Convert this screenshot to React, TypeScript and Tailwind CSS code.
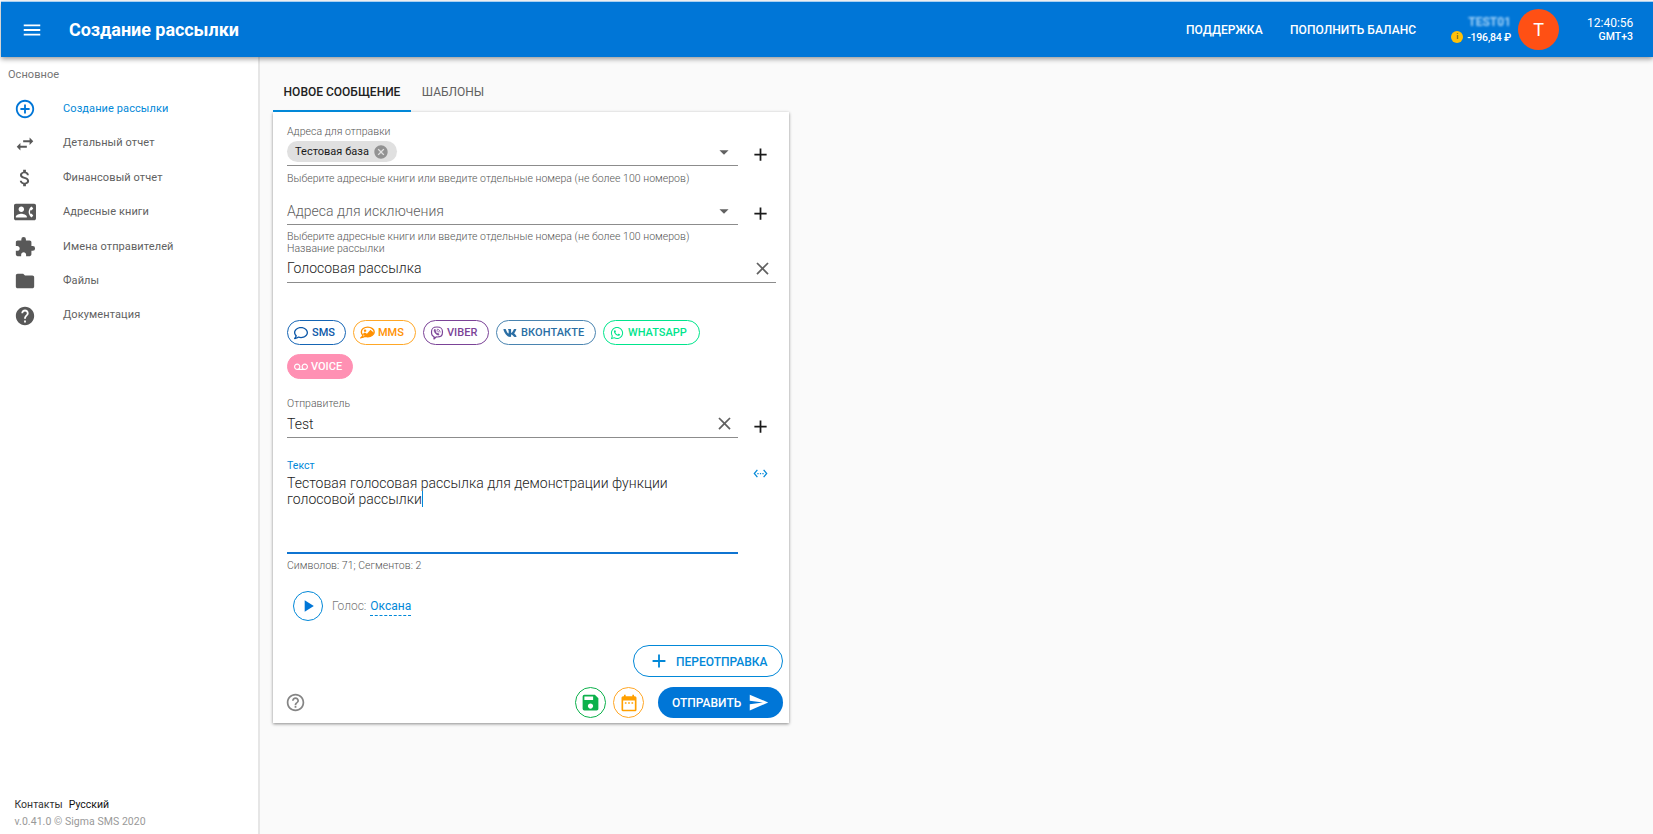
import type { ReactNode } from 'react';
import clsx from 'clsx';
import {
  MdAdd,
  MdAddCircleOutline,
  MdArrowDropDown,
  MdAttachMoney,
  MdCancel,
  MdClose,
  MdContactPhone,
  MdDateRange,
  MdExtension,
  MdFolder,
  MdHelp,
  MdHelpOutline,
  MdMenu,
  MdPlayArrow,
  MdSave,
  MdSend,
  MdSettingsEthernet,
  MdSwapHoriz,
  MdVoicemail,
} from 'react-icons/md';
import { FaRegComment, FaVk, FaWhatsapp } from 'react-icons/fa';

const MENU = [
  { label: 'Создание рассылки', icon: MdAddCircleOutline, active: true },
  { label: 'Детальный отчет', icon: MdSwapHoriz },
  { label: 'Финансовый отчет', icon: MdAttachMoney },
  { label: 'Адресные книги', icon: MdContactPhone },
  { label: 'Имена отправителей', icon: MdExtension },
  { label: 'Файлы', icon: MdFolder },
  { label: 'Документация', icon: MdHelp },
];

// Speech bubble with a small landscape inside
function MmsIcon() {
  return (
    <svg viewBox="0 0 28 24" className="h-[13px] w-[15px]" fill="currentColor">
      <path
        d="M14.500 2C7.700 2 2.500 6 2.500 11c0 2.400 1.200 4.500 3 6-.4 1.700-1.500 3.200-3 4.500 2.600-.2 5-1.100 7-2.500 1.600.5 3.200.8 5 .8 6.800 0 12-4 12-8.800S21.300 2 14.500 2z"
        fill="none"
        stroke="currentColor"
        strokeWidth="2.600"
      />
      <circle cx="9.500" cy="8.500" r="2.300" />
      <path d="M5 15l4-3 4 2.500L19.500 7l6.500 5.500c-1 4-5.500 7-11.500 7l-5-.5z" />
    </svg>
  );
}

function ViberIcon() {
  return (
    <svg
      viewBox="0 0 28 28"
      className="size-3.5"
      fill="none"
      stroke="currentColor"
      strokeWidth="2.400"
      strokeLinecap="round"
      strokeLinejoin="round"
    >
      <path d="M14 2C5.500 2 3 4.500 3 12c0 5.500 1.300 8.200 5 9.300V26l4.200-4.100c10.300.5 12.800-2 12.800-9.900C25 4.500 22.500 2 14 2z" />
      <path d="M9.500 6.500L8 8c0 4.500 4 9 8.500 10.300l2-1.800-2.800-2.300-1.500 1c-1.700-.9-2.600-2-3-3.500l1.200-1.400z" fill="currentColor" strokeWidth="1" />
      <path d="M14.500 6.500c3.500.2 5.500 2.200 5.700 5.700M14.800 9.800c1.400.2 2 .8 2.200 2.200" strokeWidth="1.600" />
    </svg>
  );
}

function Header() {
  return (
    <header className="relative z-10 ml-px mt-px flex h-14 shrink-0 items-center border-t border-[#a9d0f2] bg-[#0076d7] px-5 text-white shadow-[0_2px_5px_rgba(0,0,0,0.4)]">
      <MdMenu className="size-[22px]" />
      <h1 className="ml-[26px] text-[18px] font-bold leading-6 tracking-[-0.05px]">Создание рассылки</h1>
      <nav className="ml-auto flex text-[12px] font-medium">
        <a className="mr-[27px] w-[77px] whitespace-nowrap tracking-[0.07px]">ПОДДЕРЖКА</a>
        <a className="w-[126px] whitespace-nowrap tracking-[0.07px]">ПОПОЛНИТЬ БАЛАНС</a>
      </nav>
      <div className="ml-[35px] flex w-[60px] flex-col items-end text-[11px] font-medium leading-[15px]">
        <span className="text-[12px] font-bold leading-[15px] text-[#a5d3f7] blur-[1.2px]">TEST01</span>
        <span className="flex items-center gap-1 whitespace-nowrap text-[10.500px] tracking-[-0.2px]">
          <span className="flex size-3 items-center justify-center rounded-full bg-[#ffc107] text-[8px] font-bold leading-none text-[#7a6a20]">
            i
          </span>
          -196,84 ₽
        </span>
      </div>
      <div className="ml-[7px] flex size-[41px] items-center justify-center rounded-full bg-[#ff5014] text-[18px]">
        T
      </div>
      <div className="ml-7 w-[46px] text-right text-[12px] leading-[13px]">
        <div className="whitespace-nowrap">12:40:56</div>
        <div className="text-[10.500px] font-medium">GMT+3</div>
      </div>
    </header>
  );
}

function Sidebar() {
  return (
    <aside className="flex w-[260px] shrink-0 flex-col border-r-2 border-[#e6e6e6] bg-white">
      <div className="mt-[10px] pl-2 text-[11px] leading-4 tracking-[0.05px] text-[#757575]">Основное</div>
      <ul className="mt-[9px]">
        {MENU.map(({ label, icon: Icon, active }) => (
          <li
            key={label}
            className={clsx(
              'flex h-[34.400px] items-center pl-3.5 text-[11px] tracking-[0.1px]',
              active ? 'text-[#0288d8]' : 'text-[#616161]'
            )}
          >
            <Icon className={clsx('size-[22px]', active ? 'text-[#0076d7]' : 'text-[#585858]')} />
            <span className="ml-[27px]">{label}</span>
          </li>
        ))}
      </ul>
      <footer className="mb-1 mt-auto pl-[14.500px] text-[10.500px] leading-[17px]">
        <div className="flex gap-[6px] text-[#333]">
          <a>Контакты</a>
          <a className="text-[#111]">Русский</a>
        </div>
        <div className="tracking-[0.05px] text-[#999]">v.0.41.0 © Sigma SMS 2020</div>
      </footer>
    </aside>
  );
}

interface FieldProps {
  children: ReactNode;
  action?: ReactNode;
  side?: ReactNode;
  className?: string;
}

// Underlined row with an icon inside it and an optional one to the right
function Field({ children, action, side, className }: FieldProps) {
  return (
    <div className={clsx('flex', className)}>
      <div className="flex flex-1 items-center justify-between border-b border-[#8c8c8c] text-[14px] font-light tracking-[0.02px] text-[#222]">
        {children}
        {action}
      </div>
      {side && <div className="flex h-[23px] w-[38px] items-center justify-end self-end pr-[5px]">{side}</div>}
    </div>
  );
}

function Label({ children, className }: { children: ReactNode; className?: string }) {
  return (
    <div
      className={clsx(
        'whitespace-nowrap text-[10.500px] leading-3 tracking-[0.03px]',
        className ?? 'font-light text-[#555]'
      )}
    >
      {children}
    </div>
  );
}

const HINT = 'Выберите адресные книги или введите отдельные номера (не более 100 номеров)';

const PILL = 'flex h-[25px] items-center rounded-full border-[1.500px] pl-1.5 text-[11px] font-medium whitespace-nowrap';

function Channels() {
  return (
    <div className="flex w-[440px] flex-wrap gap-x-[7px] gap-y-[9px]">
      <button className={clsx(PILL, 'w-[59px] gap-1 border-[#1565b5] text-[#0b57a8]')}>
        <FaRegComment className="size-3.5" />
        <span className="pt-px">SMS</span>
      </button>
      <button className={clsx(PILL, 'w-[63px] gap-[3px] border-[#ffa726] text-[#ff9100]')}>
        <MmsIcon />
        <span className="pt-px">MMS</span>
      </button>
      <button className={clsx(PILL, 'w-[66px] gap-[3px] border-[#7b4397] text-[#7b4397]')}>
        <ViberIcon />
        <span className="pt-px">VIBER</span>
      </button>
      <button className={clsx(PILL, 'w-[100px] gap-1 border-[#4a84b0] text-[#2a6ea4]')}>
        <FaVk className="size-3.5" />
        <span className="pt-px tracking-[0.07px]">ВКОНТАКТЕ</span>
      </button>
      <button className={clsx(PILL, 'w-[97px] gap-1 border-[#00e58c] font-bold text-[#00e58c]')}>
        <FaWhatsapp className="size-3.5" />
        <span className="pt-px">WHATSAPP</span>
      </button>
      <button className={clsx(PILL, 'w-[66px] gap-[3px] border-[#ff90b3] bg-[#ff90b3] font-bold text-white')}>
        <MdVoicemail className="size-[14px]" />
        <span className="pt-px">VOICE</span>
      </button>
    </div>
  );
}

function MessageCard() {
  const plus = <MdAdd className="size-[21px] text-[#1a1a1a]" />;
  const arrow = <MdArrowDropDown className="mr-[3px] size-[22px] text-[#616161]" />;

  return (
    <div className="h-[611px] w-[516px] bg-white pl-[14px] pr-[13px] pt-[14px] shadow-[0_1px_3px_rgba(0,0,0,0.45)]">
      <Label>Адреса для отправки</Label>
      <Field className="h-[28px]" action={arrow} side={plus}>
        <span className="flex h-[21px] items-center gap-1 rounded-full bg-[#e0e0e0] px-2 text-[11px] font-normal text-[#1a1a1a]">
          <span className="pt-px">Тестовая база</span>
          <MdCancel className="size-4 text-[#929292]" />
        </span>
      </Field>
      <Label className="mt-[7px] font-light text-[#555]">{HINT}</Label>

      <Field className="mt-[13px] h-[27px]" action={arrow} side={plus}>
        <span className="text-[#606060]">Адреса для исключения</span>
      </Field>
      <Label className="mt-[6px] font-light text-[#555]">{HINT}</Label>
      <Label>Название рассылки</Label>
      <Field className="h-[28px]" action={<MdClose className="mr-[3px] size-[21px] text-[#616161]" />}>
        Голосовая рассылка
      </Field>

      <div className="mt-[37px]">
        <Channels />
      </div>

      <Label className="mt-[19px] font-light text-[#555]">Отправитель</Label>
      <Field className="h-[28px]" action={<MdClose className="mr-[3px] size-[21px] text-[#616161]" />} side={plus}>
        <span className="pt-px">Test</span>
      </Field>

      <div className="mt-[22px] flex h-[94px]">
        <div className="flex-1 border-b-2 border-[#0f74d1]">
          <Label className="text-[#0288d8]">Текст</Label>
          <p className="mt-[3px] w-[400px] text-[14px] font-light leading-4 tracking-[0.02px] text-[#222]">
            Тестовая голосовая рассылка для демонстрации функции голосовой рассылки
            <span className="inline-block h-4 w-px bg-[#0288d8] align-top" />
          </p>
        </div>
        <div className="flex w-[38px] justify-end pr-[5px] pt-[6px]">
          <MdSettingsEthernet className="mr-[3px] size-[15px] text-[#0288d8]" />
        </div>
      </div>
      <Label className="mt-[6px] font-light text-[#555]">Символов: 71; Сегментов: 2</Label>

      <div className="ml-[6px] mt-[19px] flex h-[30px] items-center text-[12px]">
        <button className="flex size-[30px] items-center justify-center rounded-full border border-[#0288d8]">
          <MdPlayArrow className="size-5 text-[#0076d7]" />
        </button>
        <span className="ml-[9px] font-light text-[#777]">Голос:</span>
        <a className="ml-1 border-b border-dashed border-[#0288d8] text-[#0288d8]">Оксана</a>
      </div>

      <div className="-mr-[7px] mt-6 flex justify-end">
        <button className="flex h-8 w-[150px] items-center rounded-full border border-[#0288d8] pl-[14px] text-[12px] font-medium text-[#0288d8]">
          <MdAdd className="mr-[6px] size-[22px]" />
          <span className="pt-px">ПЕРЕОТПРАВКА</span>
        </button>
      </div>

      <div className="-mr-[7px] mt-[10px] flex items-center">
        <MdHelpOutline className="-ml-[2px] mr-auto size-[21px] text-[#858585]" />
        <button className="mr-[7px] flex size-[31px] items-center justify-center rounded-full border border-[#0cb14b] text-[#0cb14b]">
          <MdSave className="size-[21px]" />
        </button>
        <button className="mr-[14px] flex size-[31px] items-center justify-center rounded-full border border-[#ffa726] text-[#ffa000]">
          <MdDateRange className="size-5" />
        </button>
        <button className="flex h-[31px] w-[125px] items-center rounded-full bg-[#0076d7] pl-[14px] text-[12px] font-medium text-white">
          ОТПРАВИТЬ
          <MdSend className="ml-[7px] size-[21px]" />
        </button>
      </div>
    </div>
  );
}

export default function App() {
  return (
    <div className="flex h-[834px] w-[1653px] flex-col overflow-hidden bg-white font-['Roboto','Liberation_Sans',sans-serif]">
      <Header />
      <div className="flex flex-1 bg-[#fafafa]">
        <Sidebar />
        <main className="pl-[13px]">
          <div className="flex h-[55px] items-end text-[12px] font-medium">
            <button className="flex h-[39px] w-[138px] items-center justify-center border-b-2 border-[#0288d8] text-[#212121]">
              НОВОЕ СООБЩЕНИЕ
            </button>
            <button className="flex h-[39px] w-[84px] items-center justify-center border-b-2 border-transparent font-normal text-[#616161]">
              ШАБЛОНЫ
            </button>
          </div>
          <MessageCard />
        </main>
      </div>
    </div>
  );
}
